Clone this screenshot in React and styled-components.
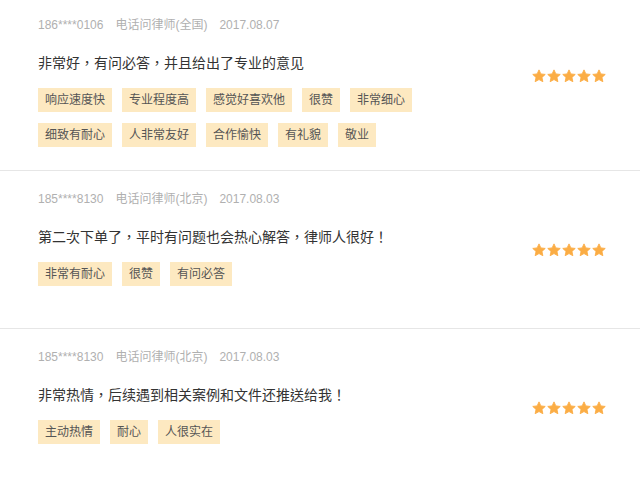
import React from 'react'
import styled, { createGlobalStyle } from 'styled-components'

const GlobalStyle = createGlobalStyle`
  html, body {
    margin: 0;
    padding: 0;
    background: #fff;
  }
  body {
    font-family: "Liberation Sans", Arial, "Noto Sans CJK SC", sans-serif;
  }
`

const reviews = [
  {
    phone: '186****0106',
    service: '电话问律师(全国)',
    date: '2017.08.07',
    text: '非常好，有问必答，并且给出了专业的意见',
    tags: ['响应速度快', '专业程度高', '感觉好喜欢他', '很赞', '非常细心', '细致有耐心', '人非常友好', '合作愉快', '有礼貌', '敬业'],
  },
  {
    phone: '185****8130',
    service: '电话问律师(北京)',
    date: '2017.08.03',
    text: '第二次下单了，平时有问题也会热心解答，律师人很好！',
    tags: ['非常有耐心', '很赞', '有问必答'],
  },
  {
    phone: '185****8130',
    service: '电话问律师(北京)',
    date: '2017.08.03',
    text: '非常热情，后续遇到相关案例和文件还推送给我！',
    tags: ['主动热情', '耐心', '人很实在'],
  },
]

const Star = () => (
  <svg width="14" height="14" viewBox="0 0 24 24">
    <path
      d="M12 1.5l3.2 6.9 7.5.9-5.6 5.1 1.5 7.4L12 18.1l-6.6 3.7 1.5-7.4-5.6-5.1 7.5-.9z"
      fill="#fbad45"
      stroke="#fbad45"
      strokeWidth="1.5"
      strokeLinejoin="round"
    />
  </svg>
)

const App = () => {
  return (
    <>
      <GlobalStyle />
      <List>
        {reviews.map((r, i) => (
          <Review key={i} $first={i === 0}>
            <Body>
              <Meta>
                <span>{r.phone}</span>
                <span>{r.service}</span>
                <span>{r.date}</span>
              </Meta>
              <Comment>{r.text}</Comment>
              <Tags>
                {r.tags.map((t) => (
                  <Tag key={t}>{t}</Tag>
                ))}
              </Tags>
            </Body>
            <Stars>
              {[0, 1, 2, 3, 4].map((n) => (
                <Star key={n} />
              ))}
            </Stars>
          </Review>
        ))}
      </List>
    </>
  )
}

export default App

const List = styled.div`
  width: 640px;
  background: #fff;
`

const Review = styled.div`
  display: flex;
  justify-content: space-between;
  align-items: flex-start;
  box-sizing: border-box;
  min-height: ${(p) => (p.$first ? '171px' : '158px')};
  padding: ${(p) => (p.$first ? '16px' : '19px')} 34px 0 38px;
  border-bottom: 1px solid #e6e6e6;
  &:last-child {
    border-bottom: none;
  }
`

const Body = styled.div`
  flex: 1;
  padding-bottom: 23px;
`

const Meta = styled.div`
  display: flex;
  gap: 12px;
  font-size: 12px;
  line-height: 18px;
  color: #b0b0b0;
`

const Comment = styled.p`
  margin: 18px 0 0;
  font-family: "Liberation Sans", Arial, "Noto Sans CJK TC", sans-serif;
  font-size: 14px;
  line-height: 22px;
  color: #333;
`

const Tags = styled.div`
  display: flex;
  flex-wrap: wrap;
  gap: 11px 10px;
  margin-top: 14px;
  max-width: 400px;
`

const Tag = styled.span`
  display: inline-block;
  height: 24px;
  line-height: 24px;
  padding: 0 7px;
  font-size: 12px;
  color: #555;
  background: #fde9c1;
`

const Stars = styled.div`
  display: flex;
  gap: 1px;
  margin-top: 53px;
`
